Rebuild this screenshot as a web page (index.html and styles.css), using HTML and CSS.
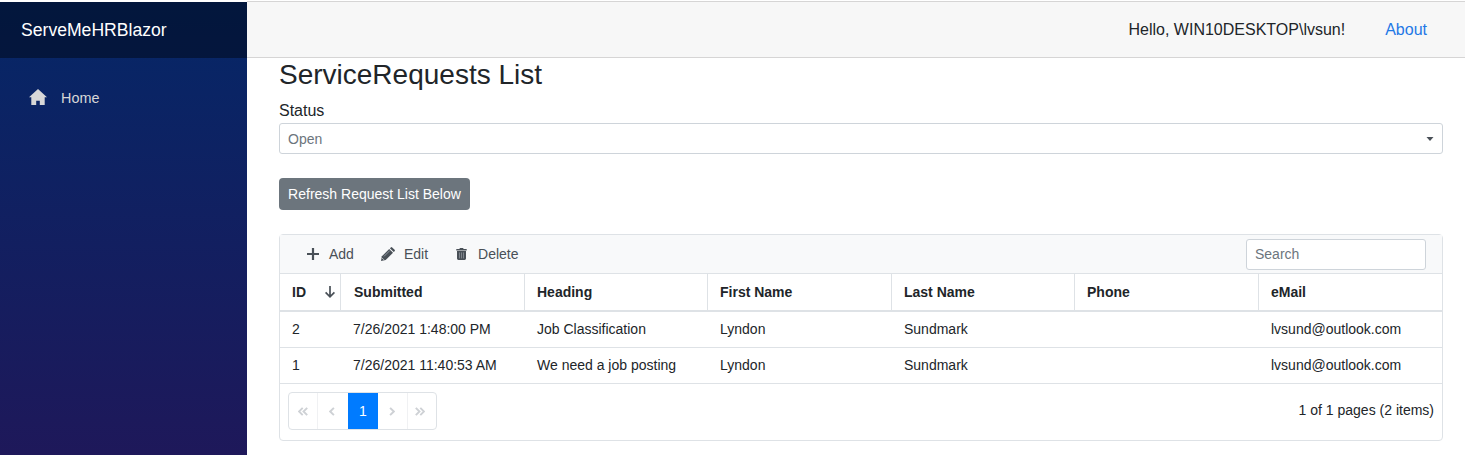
FILE: index.html
```html
<!DOCTYPE html>
<html lang="en">
<head>
<meta charset="utf-8">
<title>ServeMeHRBlazor</title>
<link rel="stylesheet" href="styles.css">
</head>
<body>
<div class="page">
  <aside class="sidebar">
    <div class="brand"><span class="brand-text">ServeMeHRBlazor</span></div>
    <a class="nav-link">
      <svg class="home-icon" width="18" height="16" viewBox="0 0 18 16"><path d="M9 0 0 8.200h2.300V16h4.900v-4.200h3.600V16h4.900V8.200H18z" fill="currentColor"/></svg>
      <span>Home</span>
    </a>
  </aside>
  <div class="main">
    <header class="top-row">
      <span class="hello">Hello, WIN10DESKTOP\lvsun!</span>
      <a class="about">About</a>
    </header>
    <main class="content">
      <h3 class="title">ServiceRequests List</h3>
      <label class="label">Status</label>
      <div class="combo"><span>Open</span><svg width="8" height="4" viewBox="0 0 8 4"><path d="M.5 0h7L4 4z" fill="#495057"/></svg></div>
      <button class="refresh">Refresh Request List Below</button>
      <section class="grid">
        <div class="toolbar">
          <div class="action add">
            <svg width="12" height="12" viewBox="0 0 12 12"><path d="M6 0v12M0 6h12" stroke="currentColor" stroke-width="2.200"/></svg>
            <span>Add</span>
          </div>
          <div class="action edit">
            <svg width="14" height="14" viewBox="0 0 14 14"><path d="M0 14 .9 9.300 8.200 2l3.800 3.800L4.700 13.100z" fill="currentColor"/><path d="M8.900 1.300 9.800.4q.7-.7 1.400 0l2.400 2.400q.7.700 0 1.400l-.9.900z" fill="currentColor"/><path d="M3 9.400 8.800 3.600" stroke="#adb5bd" stroke-width=".7"/><path d="M1.300 11.200 2.800 12.700" stroke="#f8f9fa" stroke-width=".8"/></svg>
            <span>Edit</span>
          </div>
          <div class="action delete">
            <svg width="11" height="12" viewBox="0 0 11 12"><path d="M.3.900h3L4 0h3l.7.900h3v1.700H.3zM1 3h9v7.600q0 1.400-1.400 1.400H2.400Q1 12 1 10.600z" fill="currentColor"/><path d="M3.500 4.400v6M5.500 4.400v6M7.500 4.400v6" stroke="#8b9298" stroke-width=".8"/></svg>
            <span>Delete</span>
          </div>
          <input class="search" type="text" placeholder="Search">
        </div>
        <table class="table">
          <colgroup><col class="col-id"><col class="col-a"><col class="col-b"><col class="col-a"><col class="col-b"><col class="col-a"><col></colgroup>
          <thead>
            <tr>
              <th><div class="sorted">ID<svg width="10" height="12" viewBox="0 0 10 12"><path d="M5 0v11M.6 6.400 5 10.800l4.400-4.400" fill="none" stroke="#495057" stroke-width="1.700"/></svg></div></th>
              <th>Submitted</th><th>Heading</th><th>First Name</th><th>Last Name</th><th>Phone</th><th>eMail</th>
            </tr>
          </thead>
          <tbody>
            <tr><td>2</td><td>7/26/2021 1:48:00 PM</td><td>Job Classification</td><td>Lyndon</td><td>Sundmark</td><td></td><td>lvsund@outlook.com</td></tr>
            <tr><td>1</td><td>7/26/2021 11:40:53 AM</td><td>We need a job posting</td><td>Lyndon</td><td>Sundmark</td><td></td><td>lvsund@outlook.com</td></tr>
          </tbody>
        </table>
        <div class="footer">
          <div class="pager">
            <span class="page-item first"><svg width="10" height="9" viewBox="0 0 10 9"><path d="M4.700.8 1 4.500l3.700 3.700M9.200.8 5.500 4.500l3.700 3.700"/></svg></span>
            <span class="page-item prev"><svg width="6" height="9" viewBox="0 0 6 9"><path d="M4.900.8 1.200 4.500l3.700 3.700"/></svg></span>
            <span class="page-item active">1</span>
            <span class="page-item next"><svg width="6" height="9" viewBox="0 0 6 9"><path d="M1.100.8 4.800 4.500 1.100 8.200"/></svg></span>
            <span class="page-item last"><svg width="10" height="9" viewBox="0 0 10 9"><path d="M.8.8 4.500 4.500.8 8.200M5.300.8 9 4.500 5.300 8.200"/></svg></span>
          </div>
          <span class="summary">1 of 1 pages (2 items)</span>
        </div>
      </section>
    </main>
  </div>
</div>
</body>
</html>
```
FILE: styles.css
```css
* { box-sizing: border-box; }
body {
  margin: 0;
  height: 455px;
  overflow: hidden;
  font: 16px/24px "Liberation Sans", Arial, sans-serif;
  color: #212529;
  background: #fff;
}
.page {
  display: flex;
  height: 455px;
  padding-top: 1px;
}
.sidebar {
  width: 247px;
  margin-top: 1px;
  flex: none;
  background: linear-gradient(180deg, #052767 0%, #1e185a 100%);
}
.brand {
  display: flex;
  align-items: center;
  height: 56px;
  padding-left: 21px;
  background: rgba(0, 0, 0, 0.4);
  color: #fff;
  font-size: 17.6px;
}
.nav-link {
  display: flex;
  align-items: center;
  gap: 14px;
  height: 40px;
  margin-top: 20px;
  padding-left: 29px;
  color: #d7d7d7;
  font-size: 14.4px;
}
.home-icon { position: relative; top: -1px; }
.main { flex: 1; min-width: 0; }
.top-row {
  display: flex;
  align-items: center;
  justify-content: flex-end;
  gap: 40px;
  height: 57px;
  padding-right: 38px;
  background: #f7f7f7;
  border-top: 1px solid #d6d5d5;
  border-bottom: 1px solid #d6d5d5;
}
.about { color: #1f78e6; }
.content { padding: 0 22px 0 32px; }
.title {
  margin: 0 0 7px;
  font-size: 28px;
  line-height: 34px;
  font-weight: 400;
}
.label { display: block; }
.combo {
  display: flex;
  align-items: center;
  justify-content: space-between;
  height: 31px;
  padding: 0 8px;
  border: 1px solid #ced4da;
  border-radius: 3px;
  color: #6c757d;
  font-size: 14px;
}
.refresh {
  display: block;
  width: 191px;
  height: 32px;
  margin: 24px 0;
  padding: 0;
  border: 0;
  border-radius: 4px;
  background: #6c757d;
  color: #fff;
  font: 14px/32px "Liberation Sans", Arial, sans-serif;
}
.grid {
  height: 207px;
  border: 1px solid #dee2e6;
  border-radius: 4px;
  font-size: 14px;
  line-height: 21px;
}
.toolbar {
  display: flex;
  align-items: center;
  height: 39px;
  padding: 0 16px 0 27px;
  border-bottom: 1px solid #dee2e6;
  background: #f8f9fa;
  color: #495057;
}
.action { display: flex; align-items: center; gap: 10px; }
.edit { margin-left: 27px; gap: 9px; }
.delete { margin-left: 28px; gap: 11px; }
.search {
  width: 180px;
  height: 31px;
  margin-left: auto;
  padding: 0 8px;
  border: 1px solid #ced4da;
  border-radius: 3px;
  background: #fff;
  font: 14px "Liberation Sans", Arial, sans-serif;
}
.search::placeholder { color: #6c757d; opacity: 1; }
.table {
  width: 100%;
  table-layout: fixed;
  border-collapse: separate;
  border-spacing: 0;
}
.col-id { width: 61px; }
.col-a { width: 184px; }
.col-b { width: 183px; }
.table th, .table td {
  height: 36px;
  padding: 0 0 0 12px;
  text-align: left;
  white-space: nowrap;
  border-bottom: 1px solid #dee2e6;
}
.table th {
  height: 38px;
  border-bottom-width: 2px;
  border-right: 1px solid #dee2e6;
}
.table th:nth-child(2) { padding-left: 13px; }
.table th:last-child { border-right: 0; }
.sorted {
  display: flex;
  align-items: center;
  justify-content: space-between;
  padding-right: 5px;
}
.footer {
  display: flex;
  align-items: center;
  justify-content: space-between;
  padding: 8px 8px 0;
}
.summary { margin-top: -2px; }
.pager {
  display: flex;
  width: 149px;
  height: 38px;
  border: 1px solid #dee2e6;
  border-radius: 4px;
}
.page-item {
  display: flex;
  flex: none;
  align-items: center;
  justify-content: center;
  width: 30px;
}
.page-item path { fill: none; stroke: #ced1d5; stroke-width: 1.9; }
.first { width: 29px; padding-right: 1px; border-right: 1px solid #f0f1f3; }
.prev { padding-right: 2px; }
.next { width: 29px; padding-right: 2px; }
.last { width: 29px; padding-right: 4px; border-left: 1px solid #f0f1f3; }
.active { background: #007bff; color: #fff; }
```
